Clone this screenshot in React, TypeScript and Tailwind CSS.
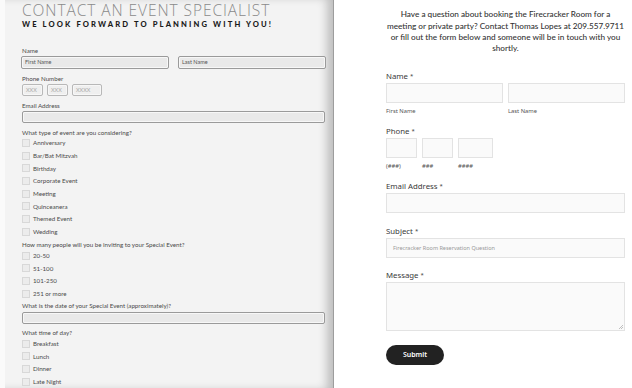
import React from 'react'

const eventTypes = ['Anniversary', 'Bar/Bat Mitzvah', 'Birthday', 'Corporate Event', 'Meeting', 'Quinceanera', 'Themed Event', 'Wedding']
const guestCounts = ['20-50', '51-100', '101-250', '251 or more']
const times = ['Breakfast', 'Lunch', 'Dinner', 'Late Night']

function Label({ children, className = '' }: { children: React.ReactNode; className?: string }) {
  return <div className={`h-[9px] leading-[9px] text-[6.2px] text-[#4a4a4a] ${className}`}>{children}</div>
}

function OldInput({ className = '', placeholder, light = false }: { className?: string; placeholder?: string; light?: boolean }) {
  return (
    <div className={`rounded-[2px] border flex items-center px-[3px] text-[5.5px] shadow-[inset_0_0_0_1px_#f7f7f7] ${light ? 'bg-[#efefef] border-[#b8b8b8]' : 'bg-[#e9e9e9] border-[#9a9a9a]'} ${className}`}>
      <span className={light ? 'text-[#aaa]' : 'text-[#555]'}>{placeholder}</span>
    </div>
  )
}

function CheckRow({ label }: { label: string }) {
  return (
    <div className="h-[12.7px] flex items-center gap-[3px]">
      <div className="w-[8px] h-[8px] bg-[#ececec] border border-[#d8d8d8]" />
      <span className="text-[6.2px] text-[#4a4a4a]">{label}</span>
    </div>
  )
}

function LeftForm() {
  return (
    <div className="flex shrink-0">
      <div className="w-[5px] bg-[#fafafa]" />
      <div className="w-[329px] bg-[#f3f3f3] pl-[17px] flex flex-col font-['Lato',sans-serif] shadow-[inset_-9px_0_10px_-3px_rgba(0,0,0,0.22)] border-r border-[#9d9d9d]">
        <div className="mt-[2px] h-[17px] leading-[17px] text-[15.5px] font-light tracking-[0.06em] text-[#8a8a8a] whitespace-nowrap font-['Open_Sans',sans-serif]">
          CONTACT AN EVENT SPECIALIST
        </div>
        <div className="h-[10px] leading-[10px] text-[7.6px] font-black tracking-[0.28em] text-[#1a1a1a] whitespace-nowrap">
          WE LOOK FORWARD TO PLANNING WITH YOU!
        </div>

        <Label className="mt-[16.5px]">Name</Label>
        <div className="mt-[1.5px] flex gap-[9px] -ml-[1px]">
          <OldInput className="w-[148px] h-[13px]" placeholder="First Name" />
          <OldInput className="w-[148px] h-[13px]" placeholder="Last Name" />
        </div>

        <Label className="mt-[4.5px]">Phone Number</Label>
        <div className="mt-[1.5px] flex gap-[4px]">
          <OldInput light className="w-[21px] h-[12px]" placeholder="XXX" />
          <OldInput light className="w-[21px] h-[12px]" placeholder="XXX" />
          <OldInput light className="w-[30px] h-[12px]" placeholder="XXXX" />
        </div>

        <Label className="mt-[4.5px]">Email Address</Label>
        <OldInput className="mt-[1.5px] w-[303px] h-[12px]" />

        <Label className="mt-[4.5px]">What type of event are you considering?</Label>
        {eventTypes.map(t => <CheckRow key={t} label={t} />)}

        <Label className="mt-[2.4px]">How many people will you be inviting to your Special Event?</Label>
        {guestCounts.map(t => <CheckRow key={t} label={t} />)}

        <Label className="mt-[1.2px]">What is the date of your Special Event (approximately)?</Label>
        <OldInput className="mt-[1.5px] w-[303px] h-[12px]" />

        <Label className="mt-[4.5px]">What time of day?</Label>
        {times.map(t => <CheckRow key={t} label={t} />)}
      </div>
    </div>
  )
}

function RLabel({ children, className = '' }: { children: React.ReactNode; className?: string }) {
  return <div className={`h-[10px] leading-[10px] text-[7.8px] text-[#3a3a3a] ${className}`}>{children} <span className="text-[6px] align-top">*</span></div>
}

function Sub({ children }: { children: React.ReactNode }) {
  return <div className="h-[8px] leading-[8px] text-[5.8px] text-[#555]">{children}</div>
}

function Box({ className = '' }: { className?: string }) {
  return <div className={`bg-[#fafafa] border border-[#e3e3e3] ${className}`} />
}

function RightForm() {
  return (
    <div className="flex-1 bg-white pl-[52px] font-['Noto_Sans',sans-serif]">
      <div className="w-[239px] flex flex-col">
        <p className="mt-[9.4px] -mx-[6px] text-center text-[8.2px] leading-[11.2px] text-[#333] font-['Lato',sans-serif] font-medium whitespace-nowrap">
          Have a question about booking the Firecracker Room for a<br />
          meeting or private party? Contact Thomas Lopes at 209.557.9711<br />
          or fill out the form below and someone will be in touch with you<br />
          shortly.
        </p>

        <RLabel className="mt-[16.8px]">Name</RLabel>
        <div className="mt-[2.3px] flex gap-[5px]">
          <div className="flex flex-col w-[117px]">
            <Box className="h-[20px]" />
            <div className="mt-[3.4px]"><Sub>First Name</Sub></div>
          </div>
          <div className="flex flex-col w-[117px]">
            <Box className="h-[20px]" />
            <div className="mt-[3.4px]"><Sub>Last Name</Sub></div>
          </div>
        </div>

        <RLabel className="mt-[11px]">Phone</RLabel>
        <div className="mt-[2.6px] flex gap-[5px]">
          <div className="flex flex-col w-[31px]">
            <Box className="h-[20px]" />
            <div className="mt-[3.4px]"><Sub>(###)</Sub></div>
          </div>
          <div className="flex flex-col w-[31px]">
            <Box className="h-[20px]" />
            <div className="mt-[3.4px]"><Sub>###</Sub></div>
          </div>
          <div className="flex flex-col w-[35px]">
            <Box className="h-[20px]" />
            <div className="mt-[3.4px]"><Sub>####</Sub></div>
          </div>
        </div>

        <RLabel className="mt-[11.3px]">Email Address</RLabel>
        <Box className="mt-[1.7px] h-[20px]" />

        <RLabel className="mt-[13.3px]">Subject</RLabel>
        <div className="mt-[2.3px] h-[20px] bg-[#fafafa] border border-[#e3e3e3] flex items-center px-[6px] text-[5.5px] text-[#999]">
          Firecracker Room Reservation Question
        </div>

        <RLabel className="mt-[11.7px]">Message</RLabel>
        <div className="mt-[2.3px] h-[49px] bg-[#fafafa] border border-[#e3e3e3] relative">
          <svg className="absolute right-[1px] bottom-[1px]" width="5" height="5" viewBox="0 0 5 5">
            <path d="M5 1L1 5M5 3L3 5" stroke="#999" strokeWidth="0.6" />
          </svg>
        </div>

        <button className="mt-[14px] w-[58px] h-[20px] rounded-full bg-[#222] text-white text-[7px] font-semibold">
          Submit
        </button>
      </div>
    </div>
  )
}

export default function App() {
  return (
    <div className="w-[632px] h-[388px] overflow-hidden flex bg-white">
      <LeftForm />
      <RightForm />
    </div>
  )
}
